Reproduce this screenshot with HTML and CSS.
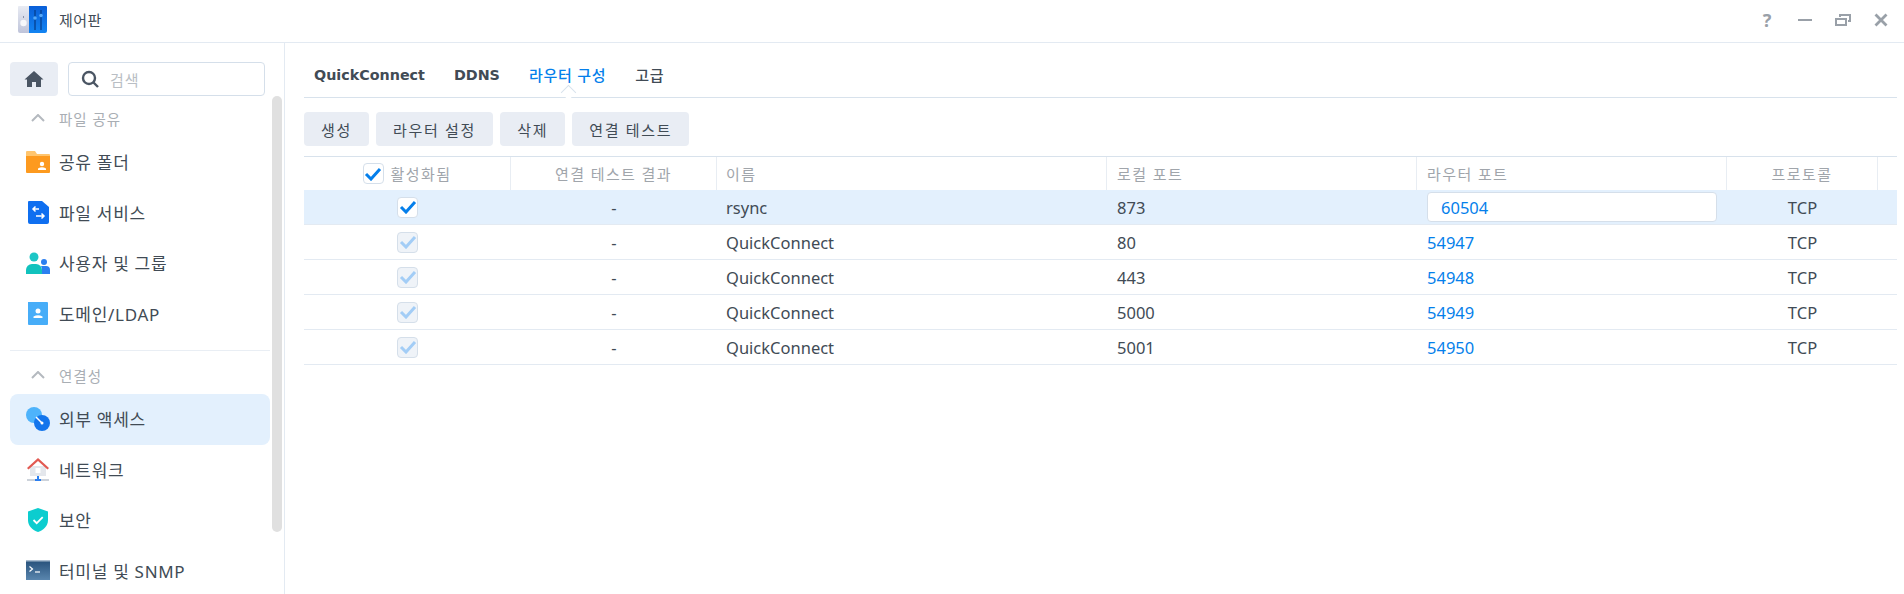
FILE: index.html
```html
<!DOCTYPE html>
<html lang="ko">
<head>
<meta charset="utf-8">
<title>제어판</title>
<link rel="stylesheet" href="styles.css">
</head>
<body>
<div class="window">
  <header class="titlebar">
    <div class="title-left">
      <svg class="app-icon" width="29" height="27" viewBox="0 0 29 27">
        <defs>
          <linearGradient id="panelL" x1="0" y1="0" x2="0" y2="1"><stop offset="0" stop-color="#e8ebf3"/><stop offset="1" stop-color="#bfc4da"/></linearGradient>
          <linearGradient id="panelR" x1="0" y1="0" x2="0" y2="1"><stop offset="0" stop-color="#0a5fd8"/><stop offset="1" stop-color="#1284f2"/></linearGradient>
        </defs>
        <path d="M0 1a1 1 0 0 1 1-1h10v27H2a2 2 0 0 1-2-2z" fill="url(#panelL)"/>
        <path d="M11 0h17a1 1 0 0 1 1 1v24a2 2 0 0 1-2 2H11z" fill="url(#panelR)"/>
        <circle cx="5.500" cy="17" r="3.200" fill="#f6f7fa"/>
        <path d="M5.500 10v2" stroke="#8a90a8" stroke-width="1"/>
        <path d="M17 4v20M23 4v20" stroke="#06408f" stroke-width="1.300"/>
        <circle cx="17" cy="12" r="1.800" fill="#55a8f8"/>
        <circle cx="23" cy="9.500" r="1.800" fill="#55a8f8"/>
      </svg>
      <span class="app-title">제어판</span>
    </div>
    <div class="win-btns">
      <span class="help">?</span>
      <svg width="16" height="16" viewBox="0 0 16 16"><path d="M1 8h14" stroke="#99a0a8" stroke-width="2"/></svg>
      <svg width="16" height="16" viewBox="0 0 16 16" fill="none" stroke="#99a0a8" stroke-width="2"><path d="M1 7h10v6H1z"/><path d="M5 5V3h10v6h-2"/></svg>
      <svg width="16" height="16" viewBox="0 0 16 16"><path d="M2.500 2.500l11 11M13.500 2.500l-11 11" stroke="#99a0a8" stroke-width="2.800"/></svg>
    </div>
  </header>
  <div class="body">
    <aside class="sidebar">
      <div class="search-row">
        <button class="home-btn">
          <svg width="20" height="18" viewBox="0 0 20 18"><path d="M10 1L0.5 9.500H3V17h5v-5h4v5h5V9.500h2.500z" fill="#4a5563"/></svg>
        </button>
        <div class="search">
          <svg width="18" height="18" viewBox="0 0 18 18" fill="none" stroke="#4a5563" stroke-width="2.400"><circle cx="8" cy="8" r="6"/><path d="M12.500 12.500L17 17"/></svg>
          <span>검색</span>
        </div>
      </div>
      <div class="scrollbar"></div>
      <div class="group-head">
        <svg width="14" height="8" viewBox="0 0 14 8"><path d="M1 7l6-6 6 6" fill="none" stroke="#b4b9bf" stroke-width="2"/></svg>
        <span>파일 공유</span>
      </div>
      <div class="item">
        <svg class="icon" width="24" height="24" viewBox="0 0 24 24"><path d="M0 2a1 1 0 0 1 1-1h8l2 3h12a1 1 0 0 1 1 1v3H0z" fill="#ffc56e"/><path d="M0 6h24v16a1 1 0 0 1-1 1H1a1 1 0 0 1-1-1z" fill="#fd9a1f"/><circle cx="16" cy="14" r="2.200" fill="#fff"/><path d="M12 20v-1.500q4-2.500 8 0V20z" fill="#fff"/></svg>
        <span>공유 폴더</span>
      </div>
      <div class="item">
        <svg class="icon" width="24" height="24" viewBox="0 0 24 24"><path d="M2 2a1 1 0 0 1 1-1h13l7 6v15a2 2 0 0 1-2 2H4a2 2 0 0 1-2-2z" fill="#0f6ff0"/><path d="M13 9H7m2.500-2.500L7 9l2.500 2.500M10 16h8m-2.500-2.500L18 16l-2.500 2.500" fill="none" stroke="#fff" stroke-width="1.500"/></svg>
        <span>파일 서비스</span>
      </div>
      <div class="item">
        <svg class="icon" width="24" height="24" viewBox="0 0 24 24"><circle cx="8" cy="6" r="4.500" fill="#1cc6c6"/><path d="M0 23v-4a6 6 0 0 1 6-6h4a6 6 0 0 1 6 6v4z" fill="#11c2bd"/><circle cx="18" cy="11" r="3" fill="#2b7ff0"/><path d="M15 15h5a4 4 0 0 1 4 4v4h-8v-4a7 7 0 0 0-1-4z" fill="#2b7ff0"/></svg>
        <span>사용자 및 그룹</span>
      </div>
      <div class="item">
        <svg class="icon" width="24" height="24" viewBox="0 0 24 24"><path d="M2 1h19a1 1 0 0 1 1 1v21a1 1 0 0 1-1 1H3a1 1 0 0 1-1-1z" fill="#47adf8"/><circle cx="12" cy="10" r="2.500" fill="#fff"/><path d="M7.500 17v-1.500q4.500-2.500 9 0V17z" fill="#fff"/></svg>
        <span>도메인/LDAP</span>
      </div>
      <div class="divider"></div>
      <div class="group-head second">
        <svg width="14" height="8" viewBox="0 0 14 8"><path d="M1 7l6-6 6 6" fill="none" stroke="#b4b9bf" stroke-width="2"/></svg>
        <span>연결성</span>
      </div>
      <div class="item active">
        <svg class="icon" width="24" height="24" viewBox="0 0 24 24"><circle cx="8" cy="8" r="8" fill="#4eb3fb"/><circle cx="16" cy="16" r="8" fill="#1375ec"/><path d="M10 10l6 6" stroke="#fff" stroke-width="1.500"/><circle cx="16" cy="16" r="1.500" fill="#fff"/></svg>
        <span>외부 액세스</span>
      </div>
      <div class="item">
        <svg class="icon" width="24" height="24" viewBox="0 0 24 24"><path d="M4 9h16v10H4z" fill="#e4e7ec"/><path d="M1 11L12 1l11 10-1.500 1.500L12 4 2.500 12.500z" fill="#e25a52"/><path d="M9.500 11h5v5h-5z" fill="#fff"/><path d="M1 22h22v2H1z" fill="#ccd2da"/><path d="M12 19v3" stroke="#2b7ff0" stroke-width="2"/><path d="M9 22h6v2H9z" fill="#2b7ff0"/></svg>
        <span>네트워크</span>
      </div>
      <div class="item">
        <svg class="icon" width="24" height="24" viewBox="0 0 24 24"><path d="M12 0l10 3.500V12c0 6-4.500 10-10 12C6.500 22 2 18 2 12V3.500z" fill="#0ccdcf"/><path d="M7.500 12l3.200 3.200 6-6" fill="none" stroke="#fff" stroke-width="1.800"/></svg>
        <span>보안</span>
      </div>
      <div class="item">
        <svg class="icon" width="24" height="20" viewBox="0 0 24 20">
          <defs><linearGradient id="term" x1="0" y1="0" x2="0" y2="1"><stop offset="0" stop-color="#28527c"/><stop offset="1" stop-color="#5a86ae"/></linearGradient></defs>
          <path d="M0 1h24v19H0z" fill="url(#term)"/><path d="M0 0h24v1.500H0z" fill="#a9bccf"/><path d="M3.500 6.500l3 2.500-3 2.500" fill="none" stroke="#fff" stroke-width="1.200"/><path d="M9 12h5" stroke="#fff" stroke-width="1.200"/></svg>
        <span>터미널 및 SNMP</span>
      </div>
    </aside>
    <main class="content">
      <nav class="tabs">
        <span class="tab">QuickConnect</span>
        <span class="tab">DDNS</span>
        <span class="tab ko current">라우터 구성</span>
        <span class="tab ko">고급</span>
      </nav>
      <div class="toolbar">
        <button class="btn">생성</button>
        <button class="btn">라우터 설정</button>
        <button class="btn">삭제</button>
        <button class="btn">연결 테스트</button>
      </div>
      <div class="table">
        <div class="row head">
          <div class="c c1 center"><span class="check"><svg width="18" height="14" viewBox="0 0 18 14"><path d="M2 7l5 5 9-10" fill="none" stroke="#057feb" stroke-width="3"/></svg></span><span>활성화됨</span></div>
          <div class="c c2 center">연결 테스트 결과</div>
          <div class="c c3">이름</div>
          <div class="c c4">로컬 포트</div>
          <div class="c c5">라우터 포트</div>
          <div class="c c6 center">프로토콜</div>
          <div class="c c7"></div>
        </div>
        <div class="row selected">
          <div class="c c1 center"><span class="check"><svg width="18" height="14" viewBox="0 0 18 14"><path d="M2 7l5 5 9-10" fill="none" stroke="#057feb" stroke-width="3"/></svg></span></div>
          <div class="c c2 center">-</div>
          <div class="c c3">rsync</div>
          <div class="c c4">873</div>
          <div class="c c5"><div class="edit">60504</div></div>
          <div class="c c6 center">TCP</div>
          <div class="c c7"></div>
        </div>
        <div class="row">
          <div class="c c1 center"><span class="check off"><svg width="18" height="14" viewBox="0 0 18 14"><path d="M2 7l5 5 9-10" fill="none" stroke="#a3cdf6" stroke-width="3"/></svg></span></div>
          <div class="c c2 center">-</div>
          <div class="c c3">QuickConnect</div>
          <div class="c c4">80</div>
          <div class="c c5 link">54947</div>
          <div class="c c6 center">TCP</div>
          <div class="c c7"></div>
        </div>
        <div class="row">
          <div class="c c1 center"><span class="check off"><svg width="18" height="14" viewBox="0 0 18 14"><path d="M2 7l5 5 9-10" fill="none" stroke="#a3cdf6" stroke-width="3"/></svg></span></div>
          <div class="c c2 center">-</div>
          <div class="c c3">QuickConnect</div>
          <div class="c c4">443</div>
          <div class="c c5 link">54948</div>
          <div class="c c6 center">TCP</div>
          <div class="c c7"></div>
        </div>
        <div class="row">
          <div class="c c1 center"><span class="check off"><svg width="18" height="14" viewBox="0 0 18 14"><path d="M2 7l5 5 9-10" fill="none" stroke="#a3cdf6" stroke-width="3"/></svg></span></div>
          <div class="c c2 center">-</div>
          <div class="c c3">QuickConnect</div>
          <div class="c c4">5000</div>
          <div class="c c5 link">54949</div>
          <div class="c c6 center">TCP</div>
          <div class="c c7"></div>
        </div>
        <div class="row">
          <div class="c c1 center"><span class="check off"><svg width="18" height="14" viewBox="0 0 18 14"><path d="M2 7l5 5 9-10" fill="none" stroke="#a3cdf6" stroke-width="3"/></svg></span></div>
          <div class="c c2 center">-</div>
          <div class="c c3">QuickConnect</div>
          <div class="c c4">5001</div>
          <div class="c c5 link">54950</div>
          <div class="c c6 center">TCP</div>
          <div class="c c7"></div>
        </div>
      </div>
    </main>
  </div>
</div>
</body>
</html>
```
FILE: styles.css
```css
* { box-sizing: border-box; }
html, body { margin: 0; height: 100%; overflow: hidden; }
body { font-family: "Noto Sans", "Noto Sans CJK KR", sans-serif; font-size: 15px; color: #414b55; background: #fff; }
.window { height: 594px; display: flex; flex-direction: column; }
.titlebar { height: 43px; flex: none; border-bottom: 1px solid #e3eaf2; display: flex; justify-content: space-between; align-items: center; padding: 0 15px 3px 18px; }
.title-left { display: flex; align-items: center; gap: 12px; }
.app-title { font-size: 15px; letter-spacing: 0.5px; color: #414b55; }
.win-btns { display: flex; align-items: center; gap: 22px; }
.help { width: 16px; text-align: center; font-size: 18px; font-weight: 700; color: #99a0a8; line-height: 18px; }
.body { flex: 1; display: flex; min-height: 0; }
.sidebar { width: 285px; flex: none; border-right: 1px solid #e3eaf2; padding: 19px 0 0 10px; position: relative; overflow: hidden; }
.search-row { display: flex; gap: 10px; width: 255px; }
.home-btn { width: 48px; height: 34px; border: 0; border-radius: 4px; background: #e9edf4; display: flex; align-items: center; justify-content: center; padding: 0; }
.search { flex: 1; height: 34px; border: 1px solid #d5dfea; border-radius: 4px; display: flex; align-items: center; gap: 11px; padding-left: 12px; color: #b9bec4; font-size: 15px; letter-spacing: 1px; }
.scrollbar { position: absolute; left: 272px; top: 53px; width: 10px; height: 436px; background: #e0e0e0; border-radius: 5px; }
.group-head { display: flex; align-items: center; gap: 14px; height: 32px; padding-left: 21px; color: #a9aeb4; font-size: 14.5px; letter-spacing: 1px; width: 260px; margin-top: 6px; }
.group-head.second { margin-top: 8px; }
.item { display: flex; align-items: center; width: 260px; height: 50.5px; padding: 0 0 1px 16px; gap: 9px; font-size: 17px; letter-spacing: 0.7px; border-radius: 8px; }
.group-head + .item { margin-top: 3px; }
.item .icon { flex: none; }
.item.active { background: #e3f0fd; }
.divider { width: 260px; height: 1px; background: #e9eef4; margin-top: 11px; }
.content { flex: 1; min-width: 0; padding: 0 7px 0 19px; }
.tabs { height: 55px; border-bottom: 1px solid #d8e2ec; display: flex; align-items: center; gap: 29px; padding: 9px 10px 0; position: relative; }
.tab { font-family: "DejaVu Sans", "Noto Sans CJK KR", sans-serif; font-weight: 700; font-size: 14.3px; color: #414b55; }
.tab.ko { font-family: "Noto Sans CJK KR", sans-serif; font-size: 15px; font-weight: 500; letter-spacing: 0.7px; }
.tab.current { color: #057feb; position: relative; }
.tab.current::after { content: ""; position: absolute; left: 50%; bottom: -13px; width: 10px; height: 10px; margin-left: -5px; background: #fff; border-left: 1px solid #d8e2ec; border-top: 1px solid #d8e2ec; transform: rotate(45deg); }
.toolbar { display: flex; gap: 7px; margin-top: 14px; }
.btn { height: 34px; border: 0; border-radius: 4px; background: #e9edf4; color: #414b55; font: inherit; font-size: 15px; letter-spacing: 1.7px; padding: 0 17px; }
.table { margin-top: 10px; border-top: 1px solid #d8e2ec; }
.row { display: flex; height: 35px; border-bottom: 1px solid #e3eaf2; align-items: stretch; }
.row.head { height: 33px; border-bottom: 0; color: #a0a5ab; }
.row.selected { background: #e3f0fd; }
.c { display: flex; flex: none; align-items: center; padding: 0 10px; font-size: 16.5px; }
.head .c { font-size: 15px; letter-spacing: 1.4px; border-right: 1px solid #e8edf3; }
.center { justify-content: center; }
.c1 { width: 207px; gap: 7px; }
.c2 { width: 206px; }
.c3 { width: 390px; padding-left: 9px; }
.c4 { width: 310px; }
.c5 { width: 310px; }
.c6 { width: 151px; }
.c7 { flex: 1 1 0; padding: 0; border-right: 0 !important; }
.link { color: #057feb; }
.check { width: 21px; height: 21px; border: 1px solid #d5dfea; border-radius: 4px; background: #fff; display: inline-flex; align-items: center; justify-content: center; flex: none; }
.check.off { background: #eff3f8; }
.edit { width: 290px; height: 30px; background: #fff; border: 1px solid #d5dfea; border-radius: 4px; color: #057feb; display: flex; align-items: center; padding-left: 13px; }
```
